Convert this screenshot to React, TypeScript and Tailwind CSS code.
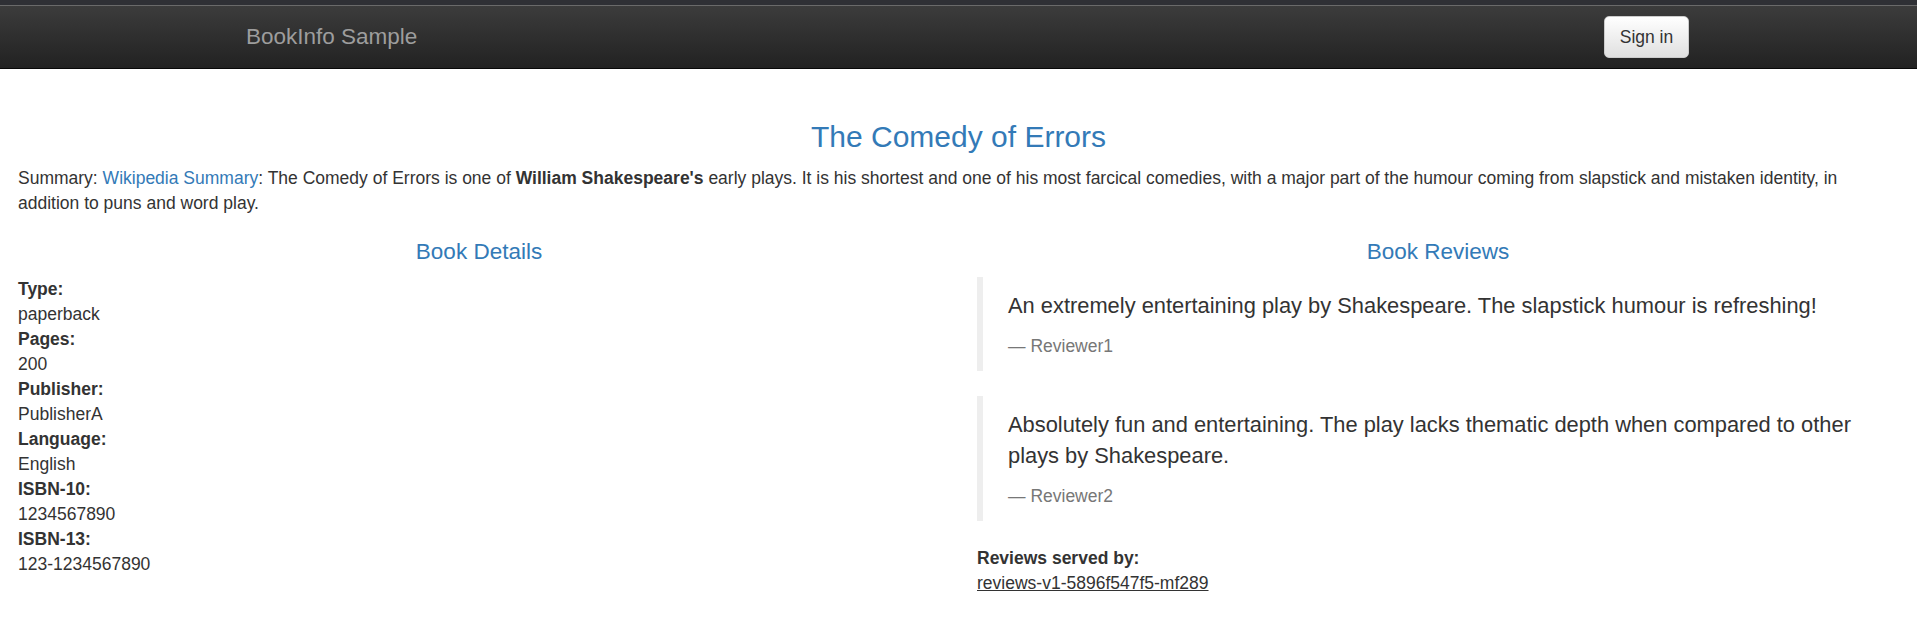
const details = [
  { label: "Type:", value: "paperback" },
  { label: "Pages:", value: "200" },
  { label: "Publisher:", value: "PublisherA" },
  { label: "Language:", value: "English" },
  { label: "ISBN-10:", value: "1234567890" },
  { label: "ISBN-13:", value: "123-1234567890" },
];

const reviews = [
  {
    text: "An extremely entertaining play by Shakespeare. The slapstick humour is refreshing!",
    reviewer: "Reviewer1",
  },
  {
    text: "Absolutely fun and entertaining. The play lacks thematic depth when compared to other plays by Shakespeare.",
    reviewer: "Reviewer2",
  },
];

function Navbar() {
  return (
    <header>
      <div className="h-[5px] bg-[#2f3035]" />
      <div className="h-px bg-[#6a6a6a]" />
      <nav className="flex h-[63px] items-center justify-between border-b border-[#080808] bg-gradient-to-b from-[#3c3c3c] to-[#222222] pl-[246px] pr-[228px]">
        <a href="#" className="-mt-[2px] text-[22.5px] leading-[25px] text-[#9d9d9d]">
          BookInfo Sample
        </a>
        <button className="flex h-[42px] w-[85px] items-center justify-center rounded-[5px] border border-[#cccccc] bg-gradient-to-b from-white to-[#e0e0e0] text-[17.5px] text-[#333333]">
          Sign in
        </button>
      </nav>
    </header>
  );
}

export default function App() {
  return (
    <div className="min-h-screen bg-white font-['Liberation_Sans',Arial,sans-serif] text-[17.5px] leading-[25px] text-[#333333]">
      <Navbar />

      <main className="px-[18px]">
        <h3 className="mt-[51px] text-center text-[30px] leading-[33px] font-normal text-[#337ab7]">
          The Comedy of Errors
        </h3>
        <p className="mt-[13px]">
          Summary:{" "}
          <a href="#" className="text-[#337ab7]">
            Wikipedia Summary
          </a>
          : The Comedy of Errors is one of <b>William Shakespeare's</b> early plays. It is his shortest and one of his
          most farcical comedies, with a major part of the humour coming from slapstick and mistaken identity, in
          addition to puns and word play.
        </p>

        <div className="mt-[24px] grid grid-cols-2 gap-[37px]">
          <section>
            <h4 className="mb-[12.5px] text-center text-[22.5px] leading-[24.75px] font-normal text-[#337ab7]">
              Book Details
            </h4>
            <dl>
              {details.map((d) => (
                <div key={d.label}>
                  <dt className="font-bold">{d.label}</dt>
                  <dd>{d.value}</dd>
                </div>
              ))}
            </dl>
          </section>

          <section>
            <h4 className="mb-[12.5px] text-center text-[22.5px] leading-[24.75px] font-normal text-[#337ab7]">
              Book Reviews
            </h4>
            {reviews.map((r) => (
              <blockquote
                key={r.reviewer}
                className="mb-[25px] border-l-[6px] border-[#eeeeee] px-[25px] pt-[13px] pb-[12px]"
              >
                <p className="mb-[12.5px] text-[21.875px] leading-[31.25px]">{r.text}</p>
                <small className="block text-[17.5px] leading-[25px] text-[#777777]">
                  {"\u2014\u00a0"}
                  {r.reviewer}
                </small>
              </blockquote>
            ))}
            <dl>
              <dt className="font-bold">Reviews served by:</dt>
              <dd>
                <u>reviews-v1-5896f547f5-mf289</u>
              </dd>
            </dl>
          </section>
        </div>
      </main>
    </div>
  );
}
